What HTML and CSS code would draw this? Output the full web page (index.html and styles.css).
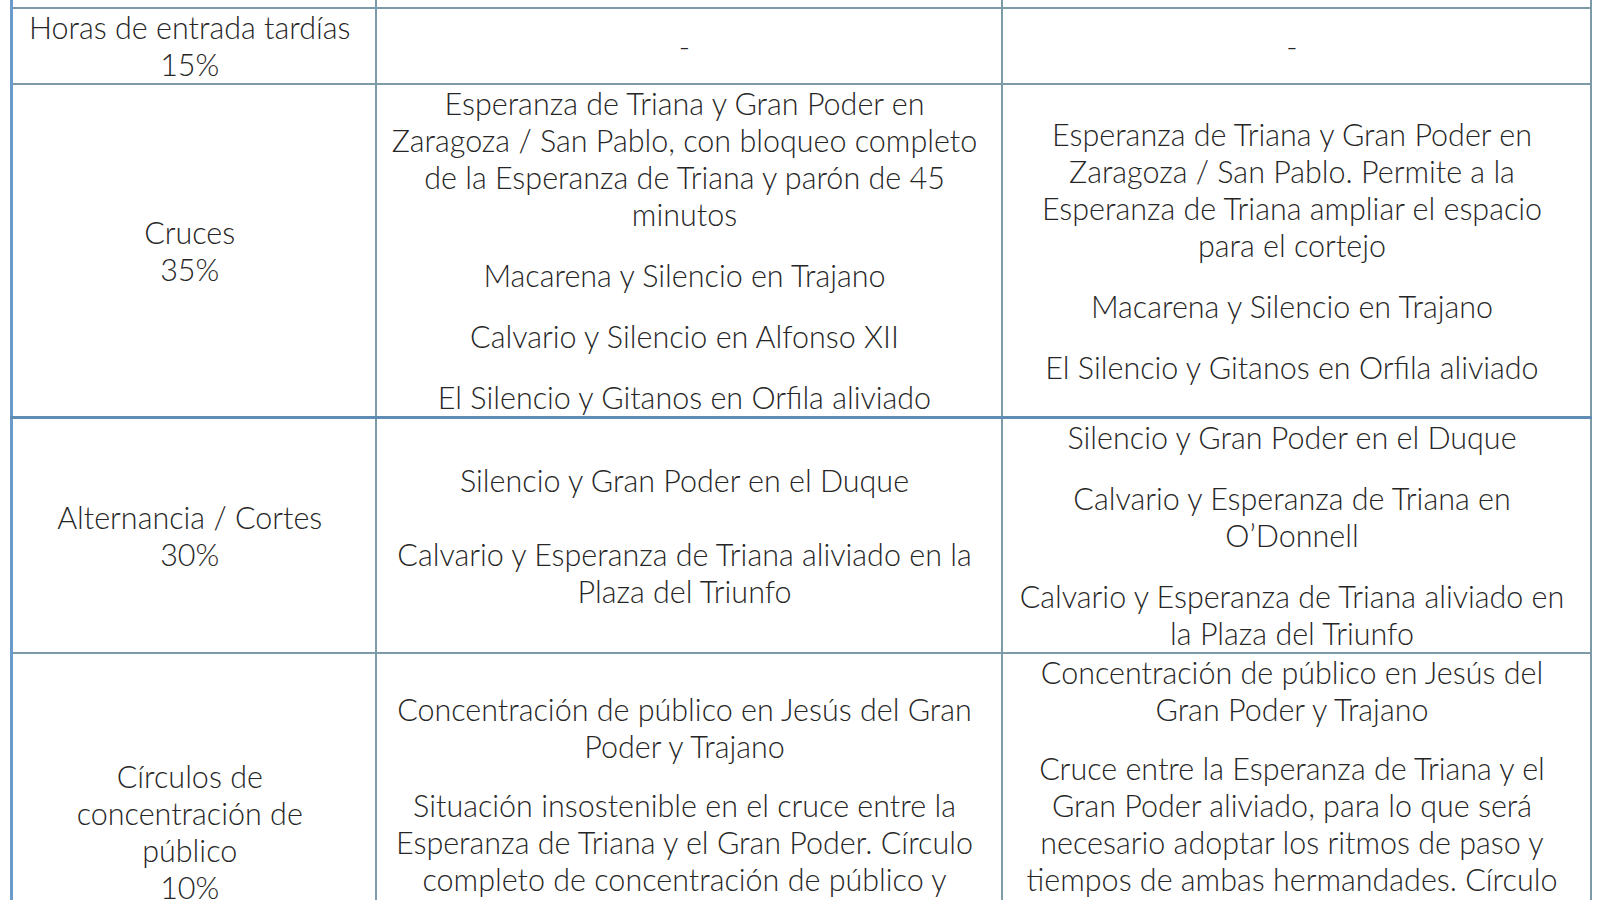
FILE: index.html
```html
<!DOCTYPE html>
<html lang="es">
<head>
<meta charset="utf-8">
<title>Tabla de incidencias</title>
<link rel="stylesheet" href="styles.css">
</head>
<body>
<div class="page">
<table class="grid">
  <colgroup>
    <col class="c1"><col class="c2"><col class="c3">
  </colgroup>
  <tbody>
    <tr class="prev">
      <td></td>
      <td></td>
      <td></td>
    </tr>
    <tr>
      <td><p>Horas de entrada tardías<br>15%</p></td>
      <td><p>-</p></td>
      <td><p>-</p></td>
    </tr>
    <tr class="strong">
      <td><p>Cruces<br>35%</p></td>
      <td>
        <p>Esperanza de Triana y Gran Poder en<br>Zaragoza / San Pablo, con bloqueo completo<br>de la Esperanza de Triana y parón de 45<br>minutos</p>
        <p>Macarena y Silencio en Trajano</p>
        <p>Calvario y Silencio en Alfonso XII</p>
        <p>El Silencio y Gitanos en Orfila aliviado</p>
      </td>
      <td>
        <p>Esperanza de Triana y Gran Poder en<br>Zaragoza / San Pablo. Permite a la<br>Esperanza de Triana ampliar el espacio<br>para el cortejo</p>
        <p>Macarena y Silencio en Trajano</p>
        <p>El Silencio y Gitanos en Orfila aliviado</p>
      </td>
    </tr>
    <tr>
      <td><p>Alternancia / Cortes<br>30%</p></td>
      <td>
        <p>Silencio y Gran Poder en el Duque<br><br>Calvario y Esperanza de Triana aliviado en la<br>Plaza del Triunfo</p>
      </td>
      <td>
        <p>Silencio y Gran Poder en el Duque</p>
        <p>Calvario y Esperanza de Triana en<br>O’Donnell</p>
        <p>Calvario y Esperanza de Triana aliviado en<br>la Plaza del Triunfo</p>
      </td>
    </tr>
    <tr class="last">
      <td><p>Círculos de<br>concentración de<br>público<br>10%</p></td>
      <td>
        <p>Concentración de público en Jesús del Gran<br>Poder y Trajano</p>
        <p>Situación insostenible en el cruce entre la<br>Esperanza de Triana y el Gran Poder. Círculo<br>completo de concentración de público y<br>colapso de las calles del entorno durante<br>más de una hora</p>
      </td>
      <td>
        <p>Concentración de público en Jesús del<br>Gran Poder y Trajano</p>
        <p>Cruce entre la Esperanza de Triana y el<br>Gran Poder aliviado, para lo que será<br>necesario adoptar los ritmos de paso y<br>tiempos de ambas hermandades. Círculo<br>de concentración de público reducido<br>en el entorno de la plaza de San<br>Lorenzo y sus calles</p>
      </td>
    </tr>
  </tbody>
</table>
</div>
</body>
</html>
```

FILE: styles.css
```css
html, body {
  margin: 0;
  padding: 0;
  background: #ffffff;
}

.page {
  padding-left: 10px;
  margin-top: -67px;
}

.grid {
  border-collapse: collapse;
  table-layout: fixed;
  width: 1579px;
  font-family: "Lato", "Liberation Sans", sans-serif;
  font-size: 30.5px;
  font-weight: 300;
  line-height: 37px;
  color: #262626;
  border-left: 3px solid #6b9bca;
}

.c1 { width: 364px; }
.c2 { width: 626px; }
.c3 { width: 589px; }

.grid td {
  border: 2px solid #7d9aa8;
  padding: 0 12px 0 4px;
  text-align: center;
  vertical-align: middle;
  white-space: nowrap;
}

.grid tr.prev td {
  height: 72px;
}

.grid td:first-child {
  border-left: 3px solid #6b9bca;
}

.grid p {
  margin: 0;
}

.grid p + p {
  margin-top: 24px;
}

.grid tr.last p + p {
  margin-top: 22px;
}

.grid tr.strong td {
  border-bottom: 3px solid #5e8cb4;
}
```
